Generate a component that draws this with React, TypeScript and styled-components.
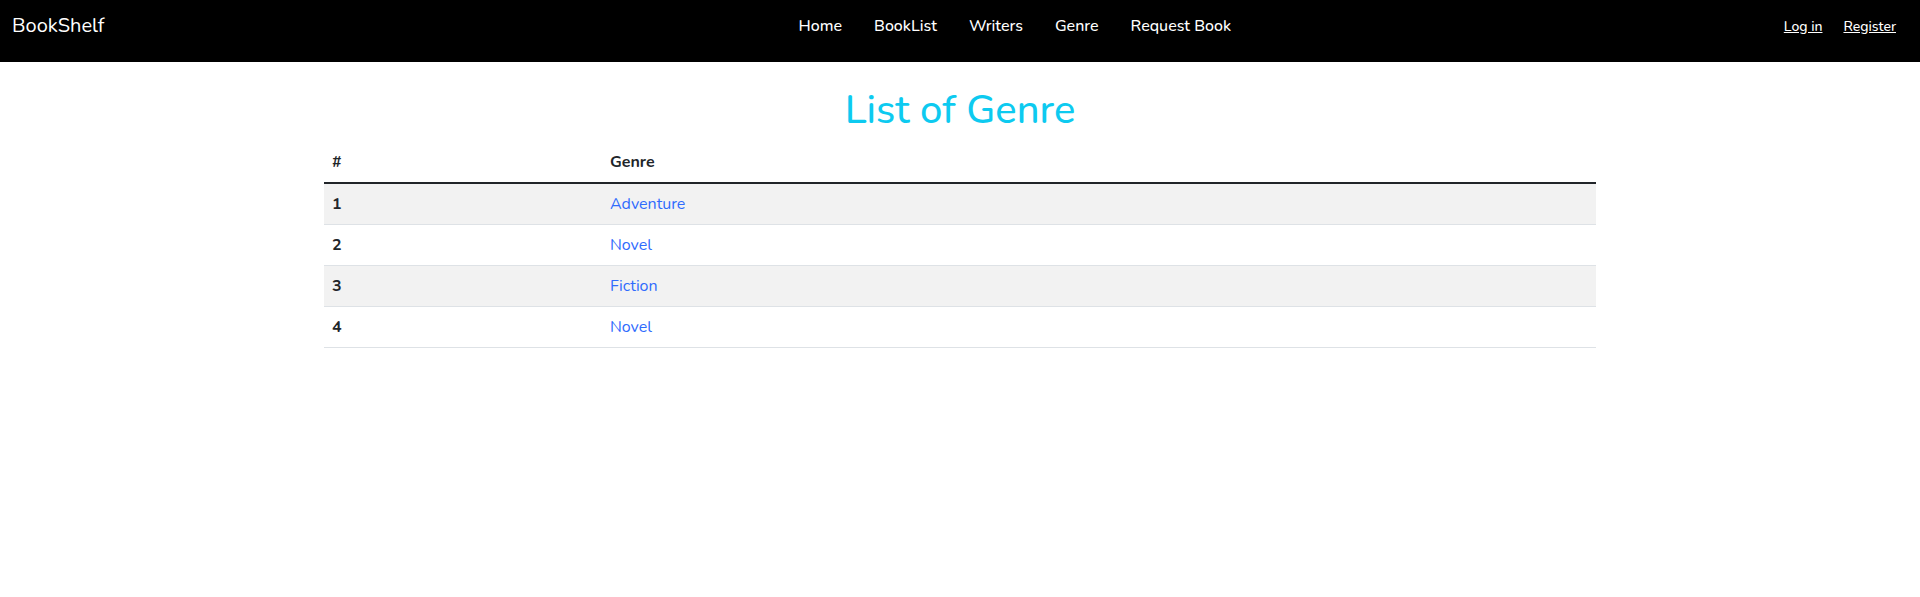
import React from "react";
import styled, { createGlobalStyle } from "styled-components";

const GlobalStyle = createGlobalStyle`
  * { box-sizing: border-box; }
  html, body { margin: 0; padding: 0; background: #fff; }
  body {
    font-family: "Nunito", "Lato", "Open Sans", sans-serif;
    font-size: 16px;
    line-height: 1.5;
    color: #212529;
  }
`;

const Navbar = styled.header`
  height: 62px;
  background: #000;
  display: flex;
  align-items: center;
  padding: 0 24px 10px 12px;
`;

const Brand = styled.a`
  font-size: 20px;
  color: #fff;
  text-decoration: none;
  line-height: 30px;
`;

const NavList = styled.nav`
  display: flex;
  gap: 32px;
  margin-left: 694px;
`;

const NavLink = styled.a`
  color: #fff;
  font-size: 16px;
  font-weight: 500;
  text-decoration: none;
  line-height: 24px;
`;

const AuthLinks = styled.div`
  margin-left: auto;
  display: flex;
  gap: 21px;
`;

const AuthLink = styled.a`
  color: #fff;
  font-size: 14px;
  font-weight: 500;
  text-decoration: underline;
  line-height: 21px;
`;

const Main = styled.main`
  width: 1272px;
  margin: 0 auto;
`;

const Title = styled.h1`
  margin: 24px 0 8px;
  text-align: center;
  color: #0dcaf0;
  font-size: 40px;
  font-weight: 500;
  line-height: 1.2;
`;

const Table = styled.table`
  width: 100%;
  border-collapse: collapse;
`;

const HeadCell = styled.th<{ $w?: number }>`
  text-align: left;
  font-weight: 700;
  padding: 8px;
  width: ${(p) => (p.$w ? `${p.$w}px` : "auto")};
  border-bottom: 2px solid #212529;
`;

const Row = styled.tr<{ $striped: boolean }>`
  background: ${(p) => (p.$striped ? "#f2f2f2" : "#fff")};
`;

const IndexCell = styled.th`
  text-align: left;
  font-weight: 700;
  padding: 8px;
  border-bottom: 1px solid #dee2e6;
`;

const Cell = styled.td`
  padding: 8px;
  border-bottom: 1px solid #dee2e6;
`;

const GenreLink = styled.a`
  color: #2f6bfd;
  text-decoration: none;
`;

const genres = ["Adventure", "Novel", "Fiction", "Novel"];

export default function App() {
  return (
    <>
      <GlobalStyle />
      <Navbar>
        <Brand href="#">BookShelf</Brand>
        <NavList>
          <NavLink href="#">Home</NavLink>
          <NavLink href="#">BookList</NavLink>
          <NavLink href="#">Writers</NavLink>
          <NavLink href="#">Genre</NavLink>
          <NavLink href="#">Request Book</NavLink>
        </NavList>
        <AuthLinks>
          <AuthLink href="#">Log in</AuthLink>
          <AuthLink href="#">Register</AuthLink>
        </AuthLinks>
      </Navbar>
      <Main>
        <Title>List of Genre</Title>
        <Table>
          <thead>
            <tr>
              <HeadCell $w={278}>#</HeadCell>
              <HeadCell>Genre</HeadCell>
            </tr>
          </thead>
          <tbody>
            {genres.map((g, i) => (
              <Row key={i} $striped={i % 2 === 0}>
                <IndexCell>{i + 1}</IndexCell>
                <Cell>
                  <GenreLink href="#">{g}</GenreLink>
                </Cell>
              </Row>
            ))}
          </tbody>
        </Table>
      </Main>
    </>
  );
}
